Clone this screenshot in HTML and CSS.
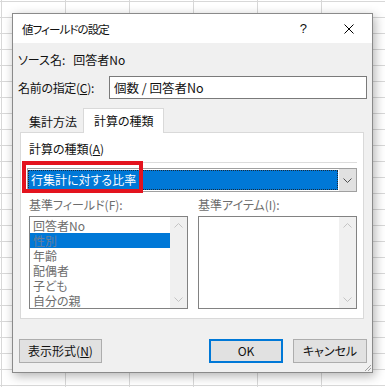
FILE: index.html
```html
<!DOCTYPE html>
<html lang="ja">
<head>
    <meta charset="UTF-8">
    <title>値フィールドの設定</title>
    <link rel="stylesheet" href="styles.css">
</head>
<body>
    <div class="dialog">
        <div class="titlebar">
            <span class="title">値フィールドの設定</span>
            <span class="help">?</span>
            <svg class="close" width="10" height="10" viewBox="0 0 10 10">
                <path d="M0.5 0.5 L9.5 9.5 M9.5 0.5 L0.5 9.5" stroke="#000" stroke-width="1" fill="none"/>
            </svg>
        </div>
        <div class="content">
            <div class="source-row">
                <span>ソース名:</span>
                <span class="source-name">回答者No</span>
            </div>
            <div class="name-row">
                <span class="name-label">名前の指定(<u>C</u>):</span>
                <div class="input">個数 / 回答者No</div>
            </div>
            <div class="tabs">
                <div class="tab">集計方法</div>
                <div class="tab active">計算の種類</div>
            </div>
            <div class="panel">
                <div class="calc-label">計算の種類(<u>A</u>)</div>
                <div class="sep"></div>
                <div class="combo">
                    <div class="combo-value">行集計に対する比率</div>
                    <div class="combo-btn">
                        <svg width="9" height="5" viewBox="0 0 9 5">
                            <path d="M0.5 0.5 L4.5 4.5 L8.5 0.5" stroke="#505050" fill="none"/>
                        </svg>
                    </div>
                </div>
                <div class="highlight"></div>
                <div class="lists">
                    <div class="list-col">
                        <div class="list-label">基準フィールド(F):</div>
                        <div class="listbox">
                            <div class="items">
                                <div class="item">回答者No</div>
                                <div class="item selected">性別</div>
                                <div class="item">年齢</div>
                                <div class="item">配偶者</div>
                                <div class="item">子ども</div>
                                <div class="item">自分の親</div>
                            </div>
                            <div class="scrollbar">
                                <svg width="9" height="5" viewBox="0 0 9 5"><path d="M0.5 4.5 L4.5 0.5 L8.5 4.5" stroke="#c4c4c4" fill="none"/></svg>
                                <svg width="9" height="5" viewBox="0 0 9 5"><path d="M0.5 0.5 L4.5 4.5 L8.5 0.5" stroke="#c4c4c4" fill="none"/></svg>
                            </div>
                        </div>
                    </div>
                    <div class="list-col">
                        <div class="list-label">基準アイテム(I):</div>
                        <div class="listbox">
                            <div class="items"></div>
                            <div class="scrollbar">
                                <svg width="9" height="5" viewBox="0 0 9 5"><path d="M0.5 4.5 L4.5 0.5 L8.5 4.5" stroke="#c4c4c4" fill="none"/></svg>
                                <svg width="9" height="5" viewBox="0 0 9 5"><path d="M0.5 0.5 L4.5 4.5 L8.5 0.5" stroke="#c4c4c4" fill="none"/></svg>
                            </div>
                        </div>
                    </div>
                </div>
            </div>
            <div class="buttons">
                <div class="btn format">表示形式(<u>N</u>)</div>
                <div class="spacer"></div>
                <div class="btn ok">OK</div>
                <div class="btn">キャンセル</div>
            </div>
        </div>
        <svg class="grip" width="8" height="8" viewBox="0 0 8 8">
            <path d="M7 1 L1 7 M7 4 L4 7" stroke="#a0a0a0" stroke-width="1" fill="none"/>
        </svg>
    </div>
</body>
</html>
```

FILE: styles.css
```css
body {
    margin: 0;
    height: 387px;
    overflow: hidden;
    font-family: "Noto Sans CJK JP", sans-serif;
    font-size: 12px;
    font-feature-settings: "palt";
    color: #111;
    background-color: #fff;
    background-image:
        linear-gradient(90deg, #d8d8d8 1px, transparent 1px),
        linear-gradient(180deg, #d8d8d8 1px, transparent 1px);
    background-size: 64px 100%, 100% 16px;
    background-position: 1px 0, 0 1px;
    padding-top: 13px;
    padding-left: 12px;
    box-sizing: border-box;
}
.dialog {
    position: relative;
    width: 361px;
    height: 360px;
    box-sizing: border-box;
    border: 1px solid #8a8a8a;
    background: #f0f0f0;
    box-shadow: 2px 3px 10px rgba(0, 0, 0, 0.3);
}
.titlebar {
    height: 29px;
    background: #fff;
    display: flex;
    align-items: center;
    padding-left: 9px;
}
.title {
    flex: 1;
    font-size: 11.5px;
    letter-spacing: -0.9px;
}
.help {
    font-family: "Liberation Sans", sans-serif;
    font-size: 13px;
    margin-right: 37px;
}
.close {
    margin-right: 18px;
}
.content {
    padding: 0 5px 9px 5px;
}
.source-row {
    margin-top: 9px;
    height: 16px;
    line-height: 16px;
    display: flex;
}
.source-name {
    margin-left: 8px;
}
.name-row {
    margin-top: 8px;
    display: flex;
    align-items: center;
}
.name-label {
    width: 91px;
    letter-spacing: -0.3px;
}
.input {
    flex: 1;
    height: 23px;
    box-sizing: border-box;
    border: 1px solid #7a7a7a;
    background: #fff;
    padding-left: 4px;
    line-height: 21px;
    font-size: 12.5px;
}
.tabs {
    margin-top: 9px;
    height: 24px;
    display: flex;
    align-items: flex-end;
    padding-left: 3px;
}
.tab {
    height: 21px;
    line-height: 22px;
    padding: 0 6px 0 8px;
    box-sizing: border-box;
}
.tab.active {
    position: relative;
    z-index: 1;
    height: 25px;
    margin-bottom: -1px;
    line-height: 24px;
    background: #fff;
    border: 1px solid #d9d9d9;
    border-bottom: none;
    padding: 0 9px 0 10px;
}
.panel {
    position: relative;
    margin: 0 3px 0 2px;
    height: 187px;
    box-sizing: border-box;
    border: 1px solid #d9d9d9;
    background: #fff;
    padding: 8px 6px 9px 6px;
}
.calc-label {
    height: 16px;
    line-height: 16px;
    padding-left: 2px;
}
.sep {
    margin-top: 5px;
    height: 1px;
    background: #dcdcdc;
}
.combo {
    margin-top: 5px;
    height: 24px;
    box-sizing: border-box;
    border: 1px solid #a0a0a0;
    display: flex;
    background: #fff;
}
.combo-value {
    flex: 1;
    margin: 1px 1px 1px 0;
    background: #0078d7;
    color: #fff;
    border: 1px dotted #1b2a3a;
    padding-left: 2px;
    line-height: 18px;
}
.combo-btn {
    width: 17px;
    background: #e1e1e1;
    display: flex;
    align-items: center;
    justify-content: center;
}
.highlight {
    position: absolute;
    left: 1px;
    top: 28px;
    width: 121px;
    height: 32px;
    box-sizing: border-box;
    border: 4px solid #e3131e;
}
.lists {
    margin-top: 5px;
    display: flex;
    gap: 10px;
    padding-left: 2px;
}
.list-col {
    flex: 1;
}
.list-label {
    height: 16px;
    line-height: 16px;
    color: #6d6d6d;
}
.listbox {
    margin-top: 3px;
    height: 93px;
    box-sizing: border-box;
    border: 1px solid #828282;
    display: flex;
}
.items {
    flex: 1;
    padding-top: 1px;
}
.item {
    height: 15px;
    line-height: 15px;
    padding-left: 3px;
    color: #6d6d6d;
}
.item.selected {
    background: #0078d7;
    color: #6b7f99;
}
.scrollbar {
    width: 17px;
    background: #f0f0f0;
    display: flex;
    flex-direction: column;
    justify-content: space-between;
    align-items: center;
    padding: 6px 0 6px;
}
.buttons {
    margin-top: 20px;
    display: flex;
    gap: 10px;
    padding-left: 1px;
}
.spacer {
    flex: 1;
}
.btn {
    width: 74px;
    height: 24px;
    box-sizing: border-box;
    border: 1px solid #adadad;
    background: #e1e1e1;
    text-align: center;
    line-height: 22px;
}
.btn.format {
    width: 83px;
}
.btn.ok {
    border: 2px solid #0078d7;
    line-height: 20px;
}
.grip {
    position: absolute;
    right: 0;
    bottom: 0;
}
```
